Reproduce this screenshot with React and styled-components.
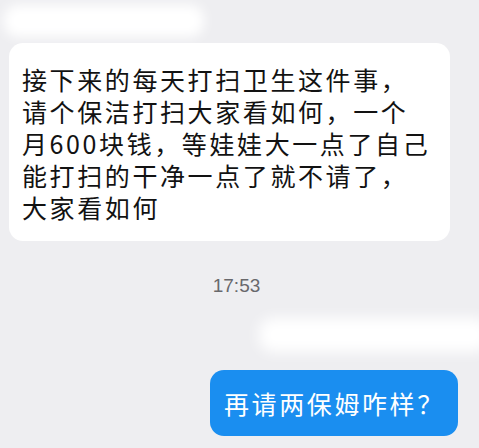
import React from "react";
import styled, { createGlobalStyle } from "styled-components";

const GlobalStyle = createGlobalStyle`
  html, body {
    margin: 0;
    padding: 0;
    background: #eeeef1;
  }
  body {
    font-family: "Noto Sans CJK SC", "Noto Sans", sans-serif;
  }
`;

const Screen = styled.div`
  width: 479px;
  height: 448px;
  overflow: hidden;
  display: flex;
  flex-direction: column;
  background: #eeeef1;
`;

// blurred leftovers of other bubbles, scrolled out of focus
const Ghost = styled.div`
  width: ${(p) => p.w}px;
  height: ${(p) => p.h}px;
  margin: ${(p) => p.m};
  align-self: ${(p) => p.align || "flex-start"};
  background: #ffffff;
  border-radius: 14px;
  filter: blur(${(p) => p.blur || 5}px);
`;

const Bubble = styled.div`
  font-size: 25px;
  line-height: 32px;
  letter-spacing: 2.6px;
  white-space: nowrap;
  border-radius: 14px;
  background: ${(p) => (p.mine ? "#1a8ef0" : "#ffffff")};
  color: ${(p) => (p.mine ? "#ffffff" : "#121212")};
  align-self: ${(p) => (p.mine ? "flex-end" : "flex-start")};
`;

const Incoming = styled(Bubble)`
  width: 441px;
  box-sizing: border-box;
  margin: 0 0 0 9px;
  padding: 20px 10px 18px 13px;
`;

const Outgoing = styled(Bubble)`
  box-sizing: border-box;
  width: 248px;
  height: 66px;
  margin: 0 21px 0 0;
  padding: 17px 8px 17px 14px;
`;

const Time = styled.div`
  align-self: center;
  margin: 33px 6px 0 0;
  font-family: "Liberation Sans", Arial, sans-serif;
  font-size: 19px;
  line-height: 24px;
  color: #68686c;
`;

const lines = [
  "接下来的每天打扫卫生这件事，",
  "请个保洁打扫大家看如何，一个",
  "月600块钱，等娃娃大一点了自己",
  "能打扫的干净一点了就不请了，",
  "大家看如何",
];

export default function App() {
  return (
    <>
      <GlobalStyle />
      <Screen>
        <Ghost w={200} h={32} m="5px 0 6px 4px" blur={6} />
        <Incoming>
          {lines.map((l, i) => (
            <div key={i}>{l}</div>
          ))}
        </Incoming>
        <Time>17:53</Time>
        <Ghost w={230} h={34} m="20px -10px 18px 0" align="flex-end" blur={7} />
        <Outgoing mine>再请两保姆咋样？</Outgoing>
      </Screen>
    </>
  );
}
